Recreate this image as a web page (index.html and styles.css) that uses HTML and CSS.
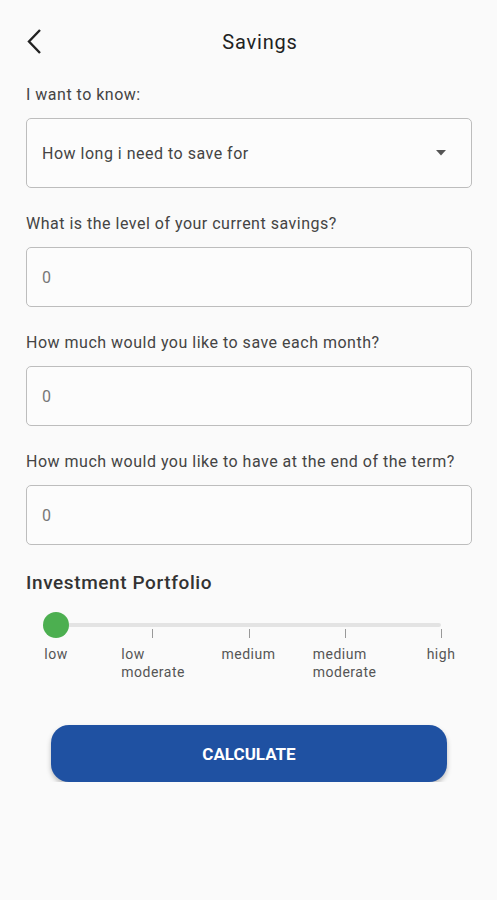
FILE: index.html
```html
<!DOCTYPE html>
<html lang="en">
<head>
  <meta charset="UTF-8">
  <title>Savings</title>
  <meta name="viewport" content="width=device-width, initial-scale=1">
  <link rel="stylesheet" href="styles.css">
</head>
<body>
  <div class="screen">
    <header class="topbar">
      <button class="back" aria-label="Back">
        <svg width="24" height="28" viewBox="0 0 24 28"><path d="M16 2 L5 13.5 L16 25" fill="none" stroke="#222" stroke-width="2.4"/></svg>
      </button>
      <h1 class="title">Savings</h1>
    </header>

    <form class="form">
      <div class="field">
        <label class="label">I want to know:</label>
        <div class="select">
          <span>How long i need to save for</span>
          <svg width="10" height="6" viewBox="0 0 10 6"><path d="M0 0 H10 L5 5.5 Z" fill="#555"/></svg>
        </div>
      </div>
      <div class="field">
        <label class="label">What is the level of your current savings?</label>
        <div class="input">0</div>
      </div>
      <div class="field">
        <label class="label">How much would you like to save each month?</label>
        <div class="input">0</div>
      </div>
      <div class="field">
        <label class="label">How much would you like to have at the end of the term?</label>
        <div class="input">0</div>
      </div>

      <h2 class="section">Investment Portfolio</h2>
      <div class="slider">
        <div class="track">
          <span class="tick t1"></span>
          <span class="tick t2"></span>
          <span class="tick t3"></span>
          <span class="tick t4"></span>
          <span class="thumb"></span>
        </div>
        <div class="levels">
          <span class="lvl l0">low</span>
          <span class="lvl l1">low<br>moderate</span>
          <span class="lvl l2">medium</span>
          <span class="lvl l3">medium<br>moderate</span>
          <span class="lvl l4">high</span>
        </div>
      </div>

      <button type="button" class="calc">CALCULATE</button>
    </form>
  </div>
</body>
</html>
```
FILE: styles.css
```css
body {
  margin: 0;
  background-color: #fafafa;
  font-family: Roboto, "Liberation Sans", Arial, sans-serif;
  color: #333;
}
.screen {
  padding: 0 25px 0 26px;
}
.topbar {
  position: relative;
  height: 84px;
  display: flex;
  align-items: center;
  justify-content: center;
}
.back {
  position: absolute;
  left: -2px;
  top: 28px;
  padding: 0;
  border: none;
  background: none;
  width: 24px;
  height: 28px;
}
.title {
  margin: 0;
  font-size: 20px;
  font-weight: 400;
  letter-spacing: 0.8px;
  color: #222;
  position: relative;
  left: 11px;
}
.form {
  display: flex;
  flex-direction: column;
}
.field {
  display: flex;
  flex-direction: column;
  margin-bottom: 25px;
}
.label {
  font-size: 16px;
  letter-spacing: 0.5px;
  color: #444;
  line-height: 22px;
  margin-bottom: 12px;
}
.select, .input {
  box-sizing: border-box;
  border: 1px solid #bdbdbd;
  border-radius: 5px;
  background: #fcfcfc;
  padding: 0 25px 0 15px;
  display: flex;
  align-items: center;
  justify-content: space-between;
  font-size: 16px;
  letter-spacing: 0.5px;
  color: #444;
}
.select {
  height: 70px;
}
.input {
  height: 60px;
  color: #777;
}
.section {
  margin: 0;
  font-size: 19px;
  font-weight: 500;
  letter-spacing: 0.6px;
  color: #333;
  line-height: 26px;
}
.slider {
  padding: 27px 31px 0 30px;
}
.track {
  position: relative;
  height: 4px;
  background: #e3e3e3;
  border-radius: 2px;
}
.tick {
  position: absolute;
  top: 6px;
  width: 1px;
  height: 9px;
  background: #999;
}
.t1 { left: 25%; }
.t2 { left: 50%; }
.t3 { left: 75%; }
.t4 { left: 100%; }
.thumb {
  position: absolute;
  left: -13px;
  top: -11px;
  width: 26px;
  height: 26px;
  border-radius: 50%;
  background: #4caf50;
}
.levels {
  position: relative;
  height: 58px;
  font-size: 14px;
  letter-spacing: 0.5px;
  color: #555;
  line-height: 18px;
}
.lvl {
  position: absolute;
  top: 18px;
}
.l0 { left: 0; transform: translateX(-50%); }
.l1 { left: calc(25% - 31px); }
.l2 { left: 50%; transform: translateX(-50%); }
.l3 { left: calc(75% - 32px); }
.l4 { left: 100%; transform: translateX(-50%); }
.calc {
  margin: 40px 25px 0;
  height: 57px;
  border: none;
  border-radius: 18px;
  background-color: #1f51a2;
  color: white;
  font-family: Roboto, "Liberation Sans", Arial, sans-serif;
  font-size: 17px;
  font-weight: 700;
  box-shadow: 0 3px 5px rgba(0, 0, 0, 0.25);
}
```
